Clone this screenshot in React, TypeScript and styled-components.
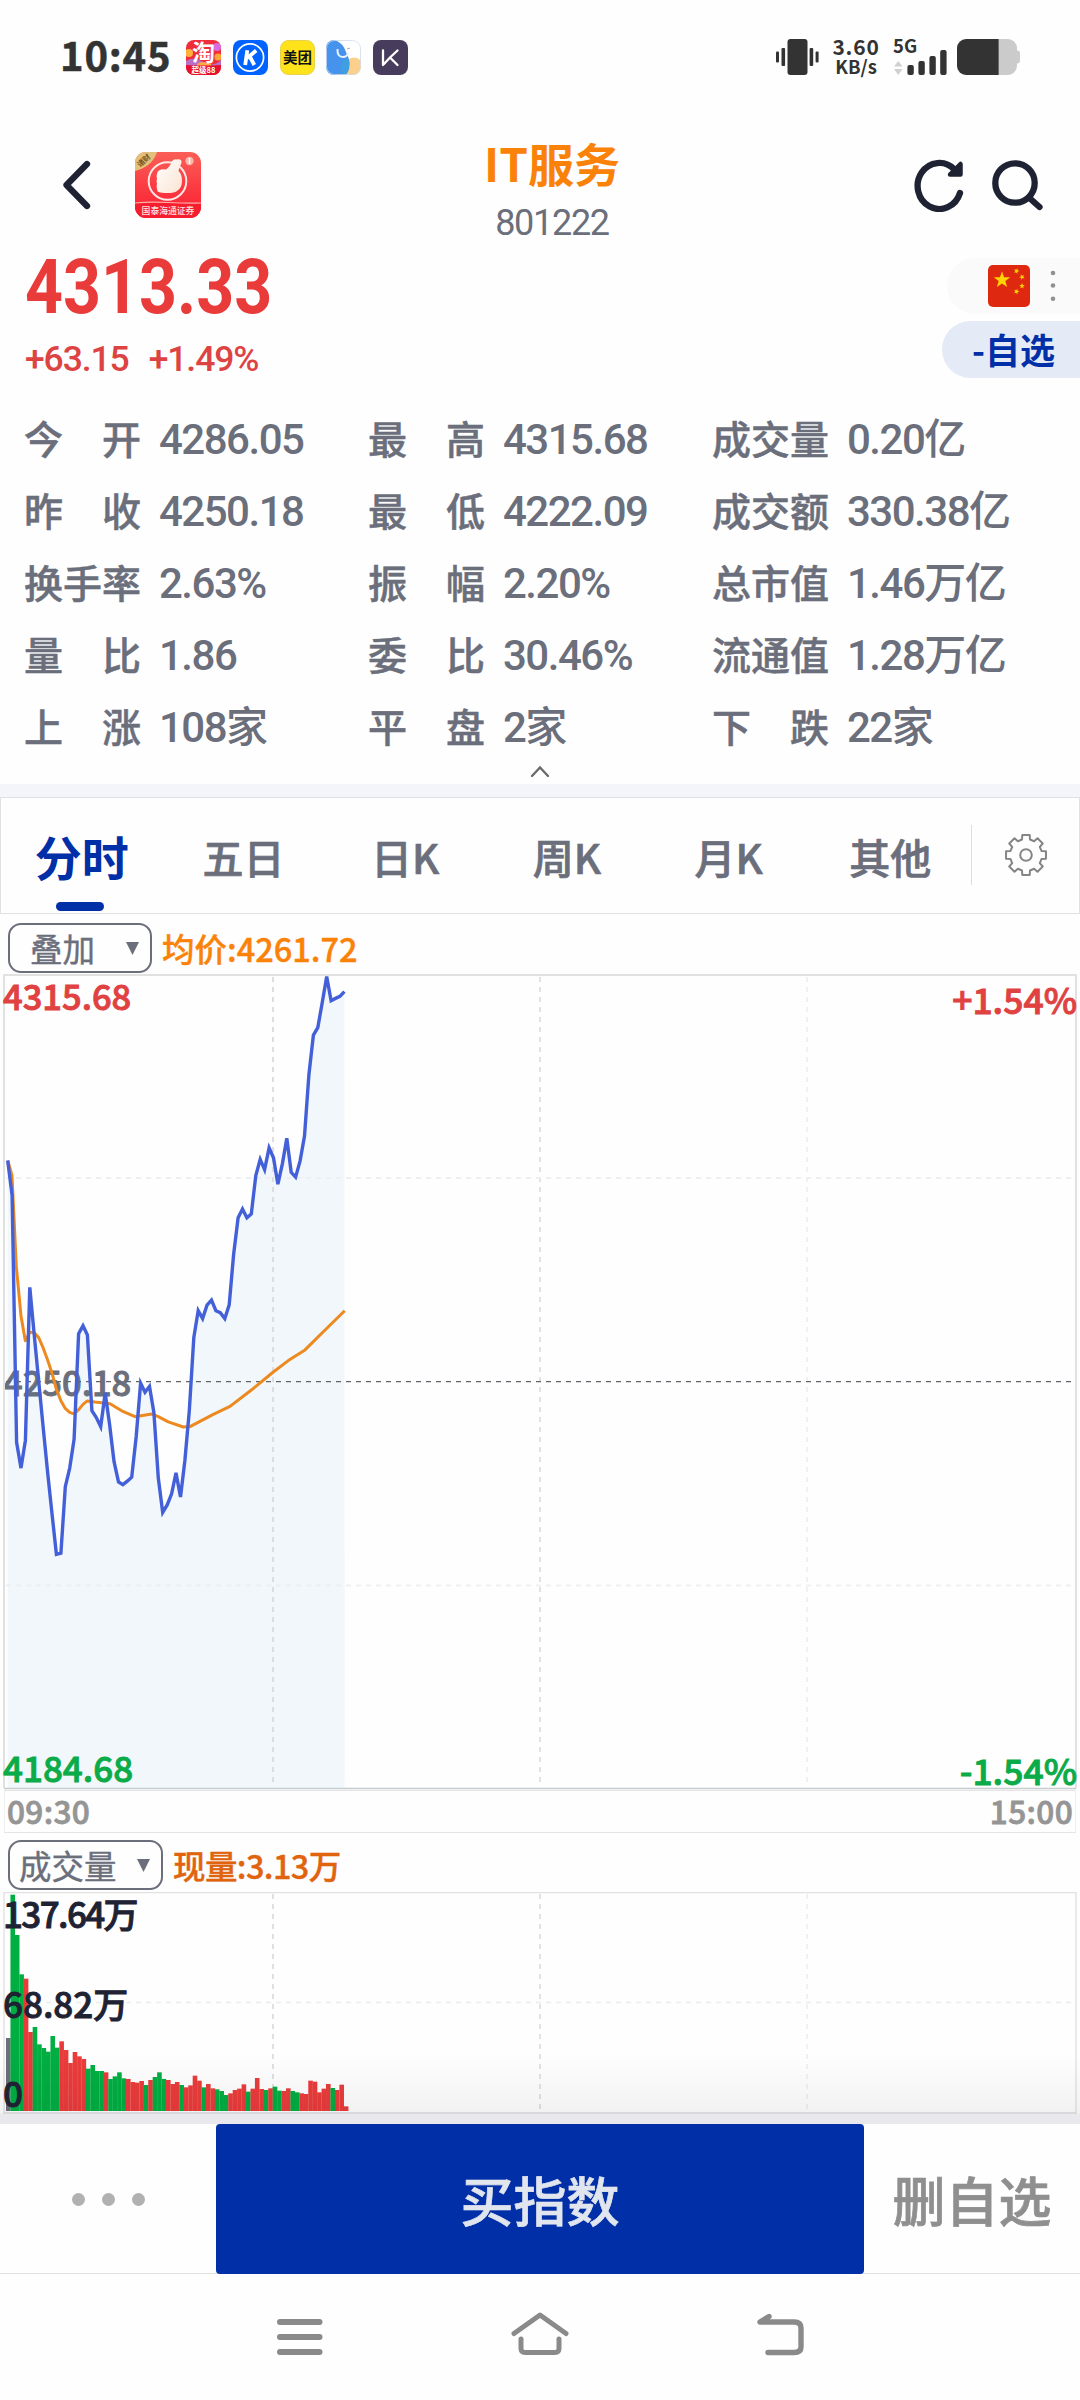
import React from 'react';
import styled, { createGlobalStyle } from 'styled-components';

const CJK = `'Noto Sans CJK SC', 'Noto Sans', sans-serif`;
const NUM = `Roboto, 'Noto Sans CJK SC', sans-serif`;

const C = {
  ink: '#1e2233',
  gray: '#6b6e7b',
  line: '#e1e1e2',
  red: '#ea3b3b',
  green: '#00ae42',
  blue: '#002fa7',
  orange: '#fb8208',
};

const GlobalStyle = createGlobalStyle`
  * { box-sizing: border-box; }
  body { margin: 0; background: #fefefe; }
  svg { display: block; }
`;

const Screen = styled.div`
  width: 1080px;
  height: 2400px;
  overflow: hidden;
  display: flex;
  flex-direction: column;
  background: #fefefe;
  font-family: ${CJK};
  color: ${C.gray};
  white-space: nowrap;
`;

/* ---------- status bar ---------- */

const StatusBar = styled.div`
  flex: none;
  height: 114px;
  padding: 0 60px 0 60px;
  display: flex;
  align-items: center;
`;

const Clock = styled.div`
  width: 126px;
  font-size: 40px;
  font-weight: 700;
  line-height: 50px;
  letter-spacing: 0.8px;
  padding-bottom: 7px;
  color: #333;
  -webkit-text-stroke: 0.5px;
`;

const AppIcons = styled.div`
  display: flex;
  gap: 11.8px;
`;

const StatusRight = styled.div`
  margin-left: auto;
  display: flex;
  align-items: center;
  color: #333;
`;

const NetSpeed = styled.div`
  width: 50px;
  margin-left: 12px;
  text-align: center;
  font-weight: 700;
  padding-bottom: 2px;
`;

const SpeedValue = styled.div`
  font-size: 21px;
  line-height: 20px;
  letter-spacing: 0.8px;
`;

const SpeedUnit = styled.div`
  font-size: 18.5px;
  line-height: 20px;
`;

const Signal = styled.div`
  margin-left: 12px;
  width: 56px;
  height: 36px;
`;

const NetType = styled.div`
  font-size: 18.5px;
  font-weight: 700;
  line-height: 13px;
  height: 10px;
`;

const Battery = styled.div`
  margin-left: 8px;
`;

/* ---------- header ---------- */

const Header = styled.header`
  flex: none;
  height: 133px;
  display: grid;
  grid-template-columns: 447px 210px 1fr;
`;

const HeaderLeft = styled.div`
  display: flex;
  align-items: center;
  gap: 43px;
  padding: 9px 0 0 62px;
  height: 133px;
`;

const HeaderTitle = styled.div`
  padding-top: 18px;
  text-align: center;
`;

const IndexName = styled.div`
  font-size: 46px;
  font-weight: 700;
  line-height: 60px;
  color: ${C.orange};
`;

const IndexCode = styled.div`
  margin-top: 11px;
  font-family: ${NUM};
  font-size: 36px;
  line-height: 40px;
  letter-spacing: -1.3px;
`;

const HeaderRight = styled.div`
  display: flex;
  justify-content: flex-end;
  align-items: center;
  gap: 28px;
  padding: 9px 36px 0 0;
  height: 133px;
`;

/* ---------- quote ---------- */

const Quote = styled.section`
  flex: none;
  height: 156px;
  display: flex;
  justify-content: space-between;
  padding-left: 25px;
  font-family: ${NUM};
  color: ${C.red};
`;

const Price = styled.div`
  font-size: 76px;
  font-weight: 700;
  line-height: 80px;
  transform: scaleX(0.872);
  transform-origin: left;
`;

const Change = styled.div`
  margin-top: 10px;
  display: flex;
  gap: 20px;
  font-size: 35.5px;
  font-weight: 500;
  line-height: 44px;
  color: #dd4343;
  letter-spacing: -1.1px;
`;

const QuoteActions = styled.div`
  padding-top: 11px;
  display: flex;
  flex-direction: column;
  align-items: flex-end;
  gap: 7px;
`;

const MarketPill = styled.div`
  width: 133px;
  height: 56px;
  border-radius: 28px 0 0 28px;
  background: #fafafa;
  display: flex;
  align-items: center;
  padding-left: 41px;
  gap: 20px;
`;

const WatchPill = styled.div`
  width: 138px;
  height: 57px;
  border-radius: 28.5px 0 0 28.5px;
  background: #e4eaf6;
  padding-right: 25px;
  text-align: right;
  font-family: ${CJK};
  font-size: 35px;
  font-weight: 700;
  line-height: 56px;
  color: ${C.blue};
`;

const Stats = styled.section`
  flex: none;
  display: grid;
  grid-template-columns: repeat(3, 344px);
  grid-auto-rows: 72px;
  padding-left: 24px;
`;

const Stat = styled.div`
  height: 72px;
  display: flex;
  align-items: baseline;
  padding-top: 1px;
`;

const StatLabel = styled.span`
  width: 135px;
  font-size: 39px;
  font-weight: 500;
  line-height: 60px;
  -webkit-text-stroke: 0.5px;
`;

const StatValue = styled.span`
  font-family: ${NUM};
  font-size: 42px;
  font-weight: 500;
  line-height: 72px;
  letter-spacing: -1.5px;
`;

const Collapse = styled.div`
  flex: none;
  height: 21px;
  padding-top: 2px;
  display: flex;
  justify-content: center;
`;

const Band = styled.div<{ $h: number; $bg: string }>`
  flex: none;
  height: ${(p) => p.$h}px;
  background: ${(p) => p.$bg};
`;

/* ---------- tabs ---------- */

const Tabs = styled.nav`
  flex: none;
  height: 117px;
  border: 1px solid ${C.line};
  display: flex;
  align-items: center;
`;

const Tab = styled.div<{ $active?: boolean }>`
  position: relative;
  width: 161.7px;
  height: 115px;
  line-height: 116px;
  text-align: center;
  font-size: ${(p) => (p.$active ? 47 : 41)}px;
  font-weight: ${(p) => (p.$active ? 700 : 500)};
  color: ${(p) => (p.$active ? C.blue : C.gray)};
  -webkit-text-stroke: ${(p) => (p.$active ? 0 : 0.7)}px;
`;

const TabMark = styled.i`
  position: absolute;
  left: 55px;
  bottom: 2px;
  width: 48px;
  height: 9px;
  border-radius: 4.5px;
  background: ${C.blue};
`;

const TabSettings = styled.div`
  flex: 1;
  height: 60px;
  margin-bottom: 1px;
  border-left: 1px solid #dedede;
  display: flex;
  align-items: center;
  justify-content: center;
`;

/* ---------- charts ---------- */

const Toolbar = styled.div<{ $h: number; $top: number }>`
  flex: none;
  height: ${(p) => p.$h}px;
  padding: ${(p) => p.$top}px 0 0 8px;
  display: flex;
  gap: 10px;
  font-size: 32.5px;
  line-height: 50px;
`;

const Picker = styled.div<{ $w: number; $pad: number }>`
  width: ${(p) => p.$w}px;
  height: 50px;
  border: 2px solid ${C.gray};
  border-radius: 13px;
  padding: 0 11px 0 ${(p) => p.$pad}px;
  display: flex;
  align-items: center;
  justify-content: space-between;
  line-height: 46px;
  -webkit-text-stroke: 0.4px;
`;

const Reading = styled.div<{ $color: string; $tight?: number }>`
  color: ${(p) => p.$color};
  font-weight: 500;
  letter-spacing: ${(p) => -(p.$tight ?? 0)}px;
  -webkit-text-stroke: 0.4px;
`;

const Plot = styled.section<{ $h: number }>`
  flex: none;
  position: relative;
  height: ${(p) => p.$h}px;
  svg { position: relative; }
`;

const Mark = styled.span<{ $y: number; $color: string; $right?: boolean; $size?: number; $tight?: number }>`
  position: absolute;
  top: ${(p) => p.$y}px;
  ${(p) => (p.$right ? 'right: 3px;' : 'left: 3px;')}
  font-size: ${(p) => p.$size ?? 35}px;
  line-height: 40px;
  font-weight: 500;
  letter-spacing: ${(p) => -(p.$tight ?? 0)}px;
  color: ${(p) => p.$color};
  -webkit-text-stroke: 0.9px;
`;

const TimeAxis = styled.div`
  flex: none;
  height: 43px;
  margin: 0 4px;
  border: 1px solid #e4e4e4;
  border-left-color: #f0f0f0;
  border-right-color: #f0f0f0;
  padding: 0 2px;
  display: flex;
  justify-content: space-between;
  font-size: 31.5px;
  font-weight: 500;
  line-height: 39px;
  letter-spacing: 0.4px;
  color: #959595;
  -webkit-text-stroke: 0.8px;
`;

const Fade = styled.div`
  position: absolute;
  left: 0;
  right: 0;
  bottom: 0;
  height: 60px;
  background: linear-gradient(rgba(0, 0, 0, 0), rgba(0, 0, 0, 0.05));
`;

/* ---------- bottom ---------- */

const ActionBar = styled.footer`
  flex: none;
  height: 150px;
  display: grid;
  grid-template-columns: 216px 648px 216px;
  font-size: 53px;
  font-weight: 500;
  line-height: 151px;
  text-align: center;
  border-bottom: 1px solid #dfdfdf;
  -webkit-text-stroke: 0.7px;
`;

const More = styled.div`
  display: flex;
  align-items: center;
  justify-content: center;
  gap: 17px;
`;

const Dot = styled.i`
  width: 13px;
  height: 13px;
  border-radius: 50%;
  background: #b1b1b1;
`;

const Buy = styled.div`
  height: 150px;
  border-radius: 4px;
  background: ${C.blue};
  color: #e1e5ee;
`;

const Remove = styled.div`
  color: #8f8f8f;
`;

const SystemNav = styled.div`
  flex: 1;
  display: flex;
  justify-content: center;
  align-items: flex-start;
  padding-top: 34px;
`;

/* ---------- data ---------- */

const STATS: [string, string][] = [
  ['今　开', '4286.05'], ['最　高', '4315.68'], ['成交量', '0.20亿'],
  ['昨　收', '4250.18'], ['最　低', '4222.09'], ['成交额', '330.38亿'],
  ['换手率', '2.63%'], ['振　幅', '2.20%'], ['总市值', '1.46万亿'],
  ['量　比', '1.86'], ['委　比', '30.46%'], ['流通值', '1.28万亿'],
  ['上　涨', '108家'], ['平　盘', '2家'], ['下　跌', '22家'],
];

const TABS = ['分时', '五日', '日K', '周K', '月K', '其他'];

const STEP = 4.43;
const START = 7.7;
const scaleY = (v: number) => v / 2.529 - 14;

const PRICE = [
  507, 595, 1220, 1285, 1215, 828, 950, 1065, 1180, 1295, 1400, 1503, 1500, 1332, 1285, 1212, 945, 925, 948,
  1140, 1157, 1180, 1095, 1175, 1268, 1320, 1327, 1318, 1308, 1205, 1070, 1093, 1078, 1145, 1310, 1397, 1378,
  1350, 1297, 1358, 1265, 1140, 955, 887, 907, 873, 860, 887, 892, 907, 872, 745, 652, 630, 652, 642, 545, 504,
  530, 475, 500, 567, 515, 451, 537, 549, 508, 445, 290, 190, 171, 108, 42, 103, 97, 92, 80,
];

const AVERAGE: [number, number][] = [
  [23, 507], [36, 545], [49, 775], [63, 900], [76, 963], [90, 941], [103, 943], [116, 955], [129, 980],
  [143, 1012], [156, 1045], [169, 1085], [183, 1115], [196, 1134], [209, 1144], [222, 1148], [236, 1137],
  [249, 1124], [262, 1115], [285, 1118], [330, 1122], [365, 1140], [405, 1155], [455, 1148], [475, 1155],
  [505, 1168], [550, 1181], [570, 1180], [640, 1149], [690, 1129], [755, 1087], [820, 1042], [865, 1013],
  [915, 986], [970, 940], [1034, 887],
];

const VOLUME_TOP = [
  474, 44, 165, 283, 296, 456, 441, 493, 504, 515, 468, 503, 484, 510, 549, 516, 529, 537, 566, 555, 573, 573,
  577, 597, 589, 577, 595, 597, 606, 608, 603, 615, 600, 591, 577, 597, 600, 612, 606, 615, 622, 616, 587, 602,
  622, 612, 625, 628, 633, 645, 640, 630, 626, 613, 635, 626, 594, 627, 630, 625, 620, 632, 633, 625, 633, 637,
  640, 642, 602, 605, 637, 626, 612, 624, 630, 614, 679,
];
const VOLUME_SIDE = 'kgggrrggggggrrrrrrggggrggggrrrrgrgggrrrgrrrrgrrgggrrrrgrrrgrggrrggrrrrrrrgrrr';
const SIDE_COLOR: Record<string, string> = { k: '#6b6e7b', g: '#00ae42', r: '#ea3b3b' };

const pricePoints = PRICE.map((v, i) => `${(START + STEP * i).toFixed(1)},${scaleY(v).toFixed(1)}`).join(' ');
const avgPoints = AVERAGE.map(([x, v]) => `${(x / 3).toFixed(1)},${scaleY(v).toFixed(1)}`).join(' ');

/* ---------- drawings ---------- */

const svgLabel = (size: number, weight = 700) => ({ fontFamily: CJK, fontSize: size, fontWeight: weight });

const TaobaoIcon = () => (
  <svg width="35" height="35" viewBox="0 0 35 35">
    <defs><clipPath id="tb"><rect width="35" height="35" rx="8" /></clipPath></defs>
    <g clipPath="url(#tb)">
      <rect width="35" height="35" fill="#ef2e3c" />
      <circle cx="3" cy="13" r="4" fill="#ffb13b" />
      <circle cx="31" cy="7" r="4" fill="#d96be0" />
      <circle cx="32" cy="17" r="3.5" fill="#ffa63b" />
      <path d="M0 21q8 -5 17 1t18 -2v7H0z" fill="#b86fc4" />
      <path d="M11 24q6 -4 14 0v3H11z" fill="#ffa648" />
      <path d="M0 25q17 1 35 0v10H0z" fill="#e60f2c" />
    </g>
    <text x="17.5" y="21" textAnchor="middle" fill="#fff" style={svgLabel(23)}>淘</text>
    <text x="17.5" y="32.8" textAnchor="middle" fill="#fff" style={svgLabel(7.5)}>超级88</text>
  </svg>
);

const KIcon = () => (
  <svg width="35" height="35" viewBox="0 0 35 35">
    <rect width="35" height="35" rx="8" fill="#0062ff" />
    <circle cx="17" cy="17.5" r="13.6" fill="none" stroke="#fff" strokeWidth="1.7" />
    <path d="M14.3 10.3L12.2 25M23.2 10.5L14.3 18M17 16.8L21.3 25" fill="none" stroke="#fff" strokeWidth="3.8" />
  </svg>
);

const MeituanIcon = () => (
  <svg width="35" height="35" viewBox="0 0 35 35">
    <rect x="0.5" y="0.5" width="34" height="34" rx="8" fill="#ffe31a" stroke="#e8d14b" />
    <text x="17.5" y="23" textAnchor="middle" fill="#111" style={svgLabel(14.5)}>美团</text>
  </svg>
);

const ShapesIcon = () => (
  <svg width="35" height="35" viewBox="0 0 35 35">
    <defs><clipPath id="sh"><rect width="35" height="35" rx="8" /></clipPath></defs>
    <g clipPath="url(#sh)">
      <rect width="35" height="35" fill="#fff" />
      <circle cx="28" cy="27" r="9.5" fill="#fbd08a" />
      <path d="M0 0H9Q17 3 20 12Q27 25 20 35H0z" fill="#4593ec" />
      <path d="M15 24Q18 18 23 19Q25 28 20 35H17Q14 30 15 24z" fill="#3f9fe0" />
      <path d="M11.5 9Q11 17 17 17Q21 17 22 13" fill="none" stroke="#e9f2fd" strokeWidth="2" />
      <path d="M21 9l3 -1" stroke="#999" strokeWidth="0.8" />
    </g>
    <rect x="0.5" y="0.5" width="34" height="34" rx="8" fill="none" stroke="#cfdcec" strokeWidth="0.8" />
  </svg>
);

const KeepIcon = () => (
  <svg width="35" height="35" viewBox="0 0 35 35">
    <rect width="35" height="35" rx="8" fill="#483c5c" />
    <path d="M10 10.5V25M24.5 10.5L17 17.5L10.5 24.5M17 17.5L24.5 25" fill="none" stroke="#fff" strokeWidth="2.3" strokeLinecap="round" />
  </svg>
);

const VibrateIcon = () => (
  <svg width="43" height="36" viewBox="0 0 43 36" fill="#333">
    <rect x="11.5" width="20" height="36" rx="3" />
    <rect x="5.5" y="9" width="3.6" height="18" rx="1" />
    <rect x="0" y="12.5" width="3" height="11" rx="1" />
    <rect x="33.6" y="9" width="3.6" height="18" rx="1" />
    <rect x="39.6" y="12.5" width="3" height="11" rx="1" />
  </svg>
);

const SignalIcon = () => (
  <svg width="56" height="26" viewBox="0 0 56 26" fill="#333">
    <path d="M1 17.5L5.3 12l4.3 5.5zM1 20h8.6L5.3 26z" fill="#d0d0d0" />
    <rect x="14.4" y="16" width="6.4" height="10" rx="2" />
    <rect x="25.4" y="12" width="6.4" height="14" rx="2" />
    <rect x="36.4" y="7" width="6.4" height="19" rx="2" />
    <rect x="47.2" y="1" width="6.4" height="25" rx="2" />
  </svg>
);

const BatteryIcon = () => (
  <svg width="63" height="36" viewBox="0 0 63 36">
    <path d="M41.7 0H51a9 9 0 0 1 9 9v2.5q3 0 3 3v7q0 3 -3 3V27a9 9 0 0 1 -9 9H41.7z" fill="#cbcbcb" />
    <path d="M9 0H41.7V36H9a9 9 0 0 1 -9 -9V9a9 9 0 0 1 9 -9z" fill="#333" />
  </svg>
);

const BackIcon = () => (
  <svg width="30" height="50" viewBox="0 0 30 50">
    <path d="M25 4L4.5 25L25 46" fill="none" stroke={C.ink} strokeWidth="6.3" strokeLinecap="round" strokeLinejoin="round" />
  </svg>
);

const BrokerLogo = () => (
  <svg width="66" height="66" viewBox="0 0 66 66">
    <defs>
      <clipPath id="bl"><rect width="66" height="66" rx="11" /></clipPath>
      <linearGradient id="blg" x1="0" y1="0" x2="0" y2="1">
        <stop offset="0" stopColor="#fa5f57" /><stop offset="1" stopColor="#fb1c30" />
      </linearGradient>
      <linearGradient id="thumb" x1="0" y1="0" x2="1" y2="1">
        <stop offset="0" stopColor="#fff" /><stop offset="1" stopColor="#fbe3d2" />
      </linearGradient>
    </defs>
    <g clipPath="url(#bl)">
      <rect width="66" height="66" fill="url(#blg)" />
      <circle cx="32.5" cy="29" r="18.8" fill="none" stroke="#ffe9e6" strokeWidth="2" />
      <path d="M24 18.5Q27 16.5 31 17.5Q35 15 36.5 10Q38 6.5 42 7.5Q47 6.5 46.5 11Q44 16 43.5 19Q47 22 47 29Q47 36 42 39Q38 42 25 40.5Q22 40 22 37Q21 34 22 32Q21 29 22 27Q21 24 22 22Q22 19.5 24 18.5z" fill="url(#thumb)" />
      <circle cx="54.5" cy="9" r="4.2" fill="#fbb5aa" />
      <path d="M54.5 6v6" stroke="#fff" strokeWidth="1.5" />
      <path d="M0 0H22Q17 15 0 19z" fill="#e5c078" />
      <path d="M0 51Q14 49.5 33 50.5T66 51V66H0z" fill="#f51d2e" />
      <path d="M0 51Q14 49.5 33 50.5T66 51" fill="none" stroke="#ffb0a8" strokeWidth="1.2" />
    </g>
    <text transform="translate(5 15.5) rotate(-42)" fill="#7a5422" style={svgLabel(7.5)}>诸财</text>
    <text x="33" y="61.5" textAnchor="middle" fill="#ffe3e0" style={svgLabel(8.8, 500)}>国泰海通证券</text>
  </svg>
);

const RefreshIcon = () => (
  <svg width="50" height="54" viewBox="0 0 50 54">
    <path d="M46 35A21.7 23 0 1 1 40.5 11.5" fill="none" stroke={C.ink} strokeWidth="6.3" strokeLinecap="round" />
    <path d="M46.5 6V16.5H36z" fill={C.ink} stroke={C.ink} strokeWidth="4.5" strokeLinejoin="round" />
  </svg>
);

const SearchIcon = () => (
  <svg width="52" height="54" viewBox="0 0 52 54">
    <circle cx="23" cy="25" r="19.7" fill="none" stroke={C.ink} strokeWidth="6.3" />
    <path d="M38 40.5L47.5 49" stroke={C.ink} strokeWidth="6.3" strokeLinecap="round" />
  </svg>
);

const star = (cx: number, cy: number, r: number, turn = 0) =>
  Array.from({ length: 10 }, (_, i) => {
    const a = ((i * 36 - 90 + turn) * Math.PI) / 180;
    const d = i % 2 ? r * 0.4 : r;
    return `${(cx + d * Math.cos(a)).toFixed(2)},${(cy + d * Math.sin(a)).toFixed(2)}`;
  }).join(' ');

const FlagIcon = () => (
  <svg width="42" height="42" viewBox="0 0 42 42">
    <rect width="42" height="42" rx="5" fill="#de2910" />
    <g fill="#ffd400">
      <polygon points={star(14, 15, 8.7)} />
      <polygon points={star(28.5, 6, 3, 20)} />
      <polygon points={star(34, 12, 3, 45)} />
      <polygon points={star(34, 21, 3)} />
      <polygon points={star(28.5, 26.5, 3, 20)} />
    </g>
  </svg>
);

const KebabIcon = () => (
  <svg width="6" height="36" viewBox="0 0 6 36" fill="#909090">
    <circle cx="3" cy="5" r="2.3" /><circle cx="3" cy="17.5" r="2.3" /><circle cx="3" cy="30.7" r="2.3" />
  </svg>
);

const gearPath = () => {
  const pts: string[] = [];
  const polar = (deg: number, r: number) => {
    const a = ((deg - 90) * Math.PI) / 180;
    return `${(22 + r * Math.cos(a)).toFixed(2)} ${(22 + r * Math.sin(a)).toFixed(2)}`;
  };
  for (let i = 0; i < 8; i++) {
    const t = i * 45;
    pts.push(polar(t - 14.5, 16), polar(t - 10.5, 20.3), polar(t + 10.5, 20.3), polar(t + 14.5, 16));
  }
  return `M${pts.join('L')}Z`;
};

const GearIcon = () => (
  <svg width="44" height="44" viewBox="0 0 44 44" fill="none" stroke="#858585" strokeWidth="2" strokeLinejoin="round">
    <path d={gearPath()} />
    <circle cx="22" cy="22" r="5.8" />
  </svg>
);

const Caret = () => (
  <svg width="13" height="13" viewBox="0 0 13 13"><path d="M0 0H13L6.5 13z" fill={C.gray} /></svg>
);

const Dashed = ({ x1, y1, x2, y2, c, w = 2 }: { x1: number; y1: number; x2: number; y2: number; c: string; w?: number }) => (
  <line x1={x1} y1={y1} x2={x2} y2={y2} stroke={c} strokeWidth={w} strokeDasharray="5 5" />
);

const PriceChart = () => (
  <svg width="1080" height="816" viewBox="0 0 1080 816">
    <polygon points={`${START},814 ${pricePoints} 344.5,814`} fill="#3c8fd0" fillOpacity="0.065" />
    <path d="M4 814V1H1076V814" fill="none" stroke={C.line} strokeWidth="2" />
    <Dashed x1={273} y1={3} x2={273} y2={812} c="#dcdfe1" />
    <Dashed x1={540} y1={3} x2={540} y2={812} c="#e2e2e2" />
    <Dashed x1={807} y1={3} x2={807} y2={812} c="#f1f1f1" />
    <Dashed x1={6} y1={204} x2={1072} y2={204} c="#eeeff0" />
    <Dashed x1={6} y1={611.5} x2={1072} y2={611.5} c="#eeeff0" />
    <Dashed x1={6} y1={407.7} x2={1072} y2={407.7} c="#62646a" w={1.3} />
    <path d="M4 814.5H1076" stroke="#c6cbce" strokeWidth="1.4" />
    <polyline points={avgPoints} fill="none" stroke="#ec8a20" strokeWidth="3" strokeLinejoin="round" />
    <polyline points={pricePoints} fill="none" stroke="#4360d8" strokeWidth="3.4" />
  </svg>
);

const VolumeChart = () => (
  <svg width="1080" height="222" viewBox="0 0 1080 222">
    <path d="M4 221V0.5H1076V221" fill="none" stroke={C.line} strokeWidth="1.4" />
    <Dashed x1={273} y1={2} x2={273} y2={218} c="#e0e0e0" />
    <Dashed x1={540} y1={2} x2={540} y2={218} c="#e2e2e2" />
    <Dashed x1={807} y1={2} x2={807} y2={218} c="#f1f1f1" />
    <Dashed x1={6} y1={110.5} x2={1072} y2={110.5} c="#ececec" w={1.4} />
    {VOLUME_TOP.map((v, i) => {
      const top = v / 3 - 12;
      return <rect key={i} x={6 + 4.445 * i} y={top} width={4.6} height={219 - top} fill={SIDE_COLOR[VOLUME_SIDE[i]]} />;
    })}
    <path d="M3 221H1077" stroke="#e4e4e6" strokeWidth="2" />
  </svg>
);

const NavIcons = () => (
  <svg width="540" height="54" viewBox="0 0 540 54" fill="none" stroke="#8a8a8a" strokeWidth="6" strokeLinecap="round" strokeLinejoin="round">
    <path d="M10 14H49.5M10 29H49.5M10 44H49.5" />
    <path d="M244 25.5L270 7L296 25.5" strokeWidth="5" />
    <path d="M251 31V40.5Q251 44.5 255 44.5H285Q289 44.5 289 40.5V31" strokeWidth="5" />
    <path d="M499 8.5L490 14H524Q531 14 531 20V39Q531 44.5 524 44.5H498" strokeWidth="5.4" />
  </svg>
);

/* ---------- page ---------- */

export default function App() {
  return (
    <Screen>
      <GlobalStyle />
      <StatusBar>
        <Clock>10:45</Clock>
        <AppIcons>
          <TaobaoIcon /><KIcon /><MeituanIcon /><ShapesIcon /><KeepIcon />
        </AppIcons>
        <StatusRight>
          <VibrateIcon />
          <NetSpeed>
            <SpeedValue>3.60</SpeedValue>
            <SpeedUnit>KB/s</SpeedUnit>
          </NetSpeed>
          <Signal>
            <NetType>5G</NetType>
            <SignalIcon />
          </Signal>
          <Battery><BatteryIcon /></Battery>
        </StatusRight>
      </StatusBar>

      <Header>
        <HeaderLeft><BackIcon /><BrokerLogo /></HeaderLeft>
        <HeaderTitle>
          <IndexName>IT服务</IndexName>
          <IndexCode>801222</IndexCode>
        </HeaderTitle>
        <HeaderRight><RefreshIcon /><SearchIcon /></HeaderRight>
      </Header>

      <Quote>
        <div>
          <Price>4313.33</Price>
          <Change><span>+63.15</span><span>+1.49%</span></Change>
        </div>
        <QuoteActions>
          <MarketPill><FlagIcon /><KebabIcon /></MarketPill>
          <WatchPill>-自选</WatchPill>
        </QuoteActions>
      </Quote>

      <Stats>
        {STATS.map(([label, value]) => (
          <Stat key={label}>
            <StatLabel>{label}</StatLabel>
            <StatValue>{value}</StatValue>
          </Stat>
        ))}
      </Stats>
      <Collapse>
        <svg width="20" height="13" viewBox="0 0 20 13">
          <path d="M2 11L10 2.5L18 11" fill="none" stroke="#6b6b6b" strokeWidth="2.4" strokeLinecap="round" />
        </svg>
      </Collapse>
      <Band $h={13} $bg="#f3f5fa" />

      <Tabs>
        {TABS.map((t, i) => (
          <Tab key={t} $active={i === 0}>{t}{i === 0 && <TabMark />}</Tab>
        ))}
        <TabSettings><GearIcon /></TabSettings>
      </Tabs>

      <Toolbar $h={60} $top={9}>
        <Picker $w={144} $pad={20}>叠加<Caret /></Picker>
        <Reading $color={C.orange}>均价:4261.72</Reading>
      </Toolbar>
      <Plot $h={816}>
        <Mark $y={387} $color={C.gray} $size={34.5}>4250.18</Mark>
        <PriceChart />
        <Mark $y={1} $color="#e04141" $size={34.5}>4315.68</Mark>
        <Mark $y={5} $color="#e04141" $right $size={35.5}>+1.54%</Mark>
        <Mark $y={773} $color="#0aab48" $size={35}>4184.68</Mark>
        <Mark $y={776} $color="#0aab48" $right $size={35.5}>-1.54%</Mark>
      </Plot>
      <TimeAxis><span>09:30</span><span>15:00</span></TimeAxis>

      <Toolbar $h={59} $top={7}>
        <Picker $w={155} $pad={9}>成交量<Caret /></Picker>
        <Reading $color="#e0640e" $tight={0.6}>现量:3.13万</Reading>
      </Toolbar>
      <Plot $h={222}>
        <VolumeChart />
        <Fade />
        <Mark $y={1} $color={C.ink} $tight={1.6}>137.64万</Mark>
        <Mark $y={91} $color={C.ink}>68.82万</Mark>
        <Mark $y={180} $color={C.ink}>0</Mark>
      </Plot>
      <Band $h={10} $bg="#e8e8ed" />

      <ActionBar>
        <More><Dot /><Dot /><Dot /></More>
        <Buy>买指数</Buy>
        <Remove>删自选</Remove>
      </ActionBar>
      <SystemNav><NavIcons /></SystemNav>
    </Screen>
  );
}
